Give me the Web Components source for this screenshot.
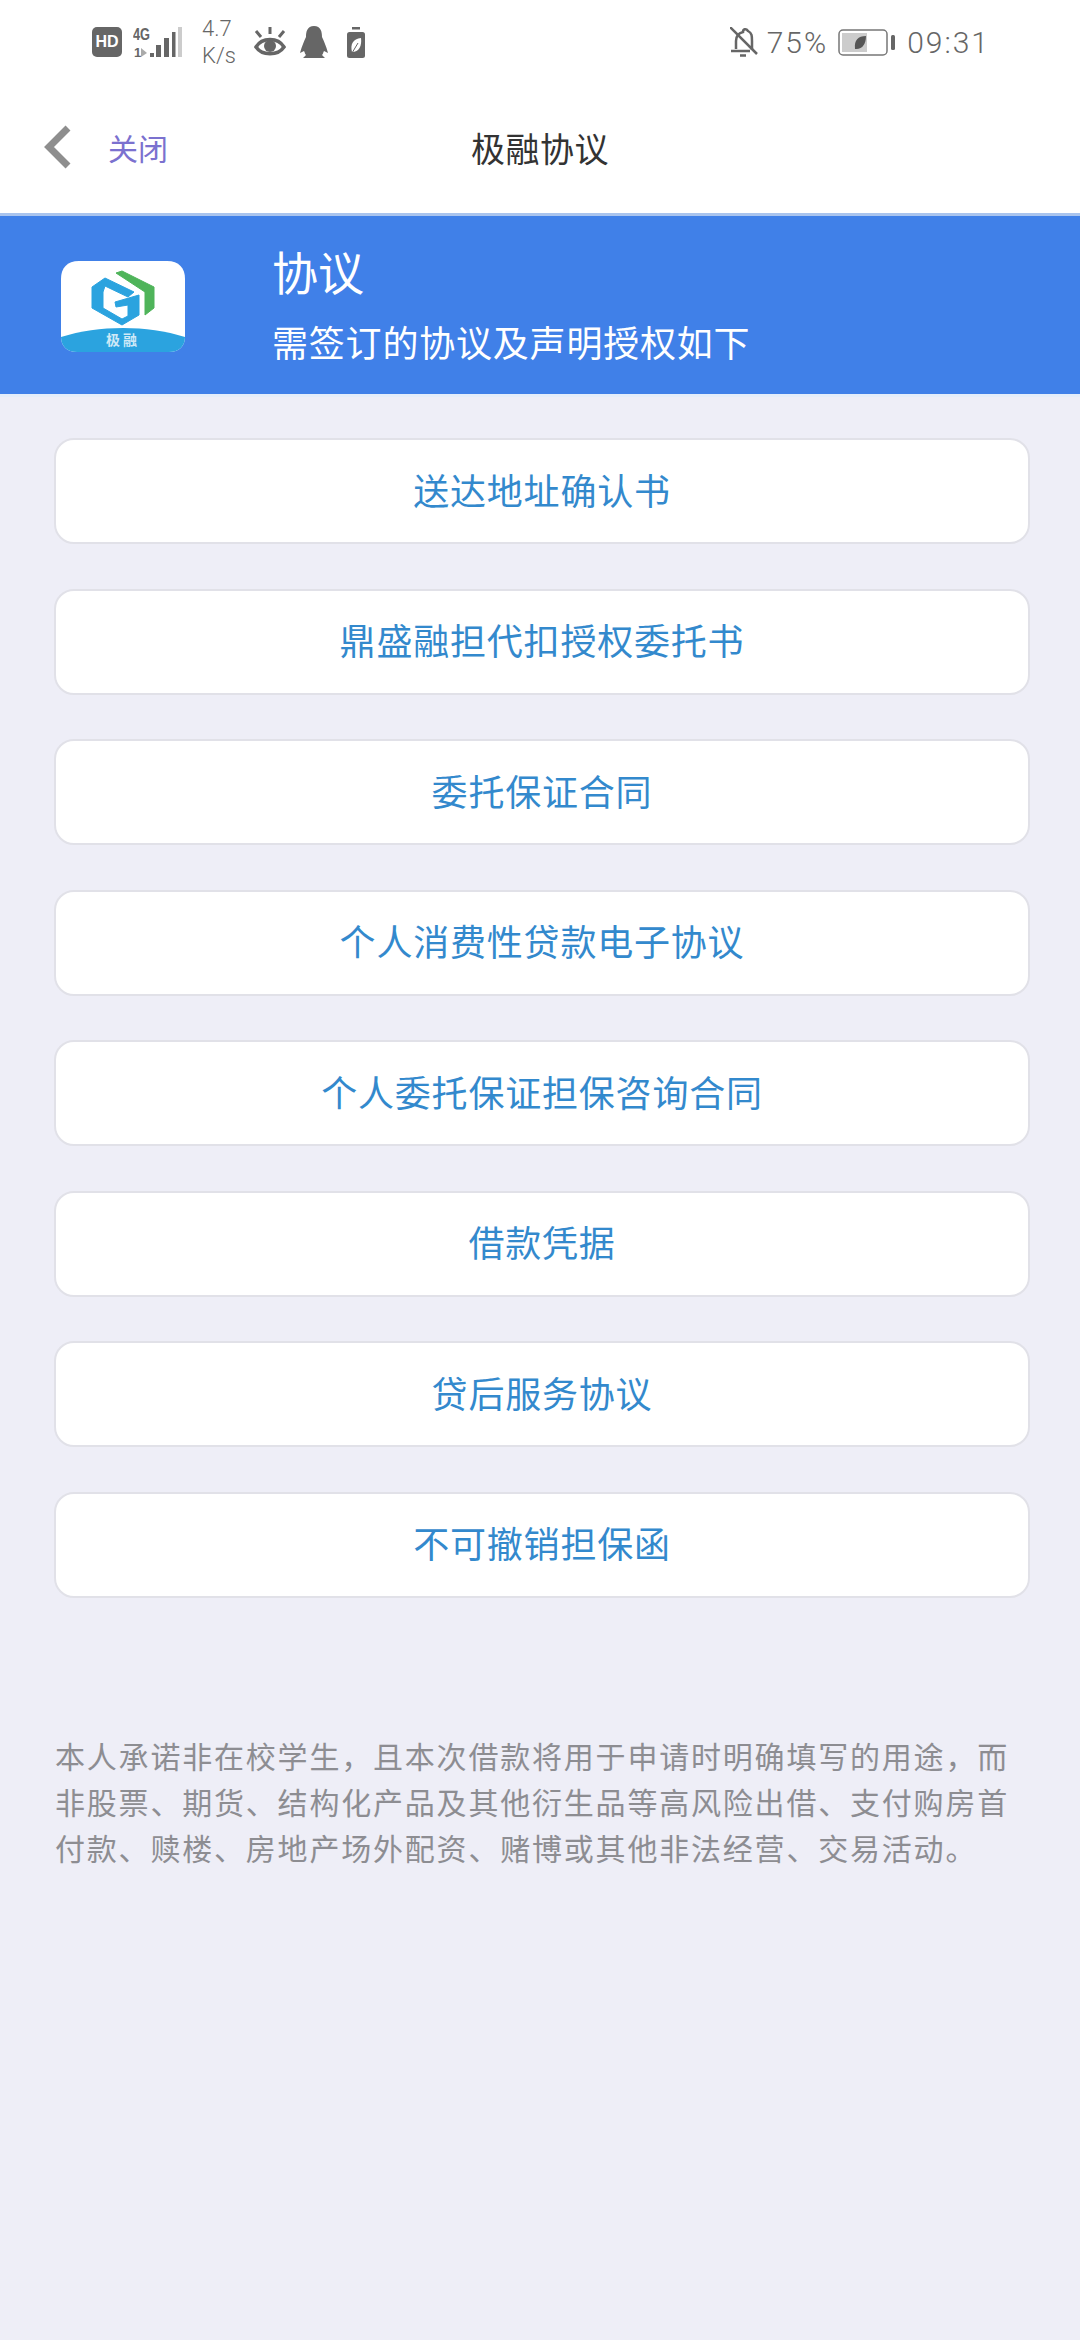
<!DOCTYPE html>
<html lang="zh">
<head>
<meta charset="utf-8">
<title>极融协议</title>
<style>
    html, body { margin: 0; padding: 0; }
    body {
        width: 1080px;
        height: 2340px;
        overflow: hidden;
        background: #eeeef7;
        font-family: "Noto Sans CJK SC", "Noto Sans", sans-serif;
    }
    agreement-list { display: block; }
</style>
</head>
<body>
<status-bar></status-bar>
<nav-bar></nav-bar>
<agreement-banner></agreement-banner>
<agreement-list>
    <agreement-button>送达地址确认书</agreement-button>
    <agreement-button>鼎盛融担代扣授权委托书</agreement-button>
    <agreement-button>委托保证合同</agreement-button>
    <agreement-button>个人消费性贷款电子协议</agreement-button>
    <agreement-button>个人委托保证担保咨询合同</agreement-button>
    <agreement-button>借款凭据</agreement-button>
    <agreement-button>贷后服务协议</agreement-button>
    <agreement-button>不可撤销担保函</agreement-button>
</agreement-list>
<legal-note>本人承诺非在校学生，且本次借款将用于申请时明确填写的用途，而非股票、期货、结构化产品及其他衍生品等高风险出借、支付购房首付款、赎楼、房地产场外配资、赌博或其他非法经营、交易活动。</legal-note>

<script>
class StatusBar extends HTMLElement {
    constructor() {
        super();
        this.attachShadow({ mode: 'open' });
    }

    connectedCallback() {
        this.shadowRoot.innerHTML = `
            <style>
                :host {
                    display: flex;
                    justify-content: space-between;
                    align-items: center;
                    height: 84px;
                    padding: 0 90px 0 92px;
                    background: #fff;
                    color: #666;
                    font-family: "Roboto", sans-serif;
                    font-weight: 300;
                }
                .side { display: flex; align-items: center; }
                svg { display: block; flex: none; }
                .hd {
                    display: flex;
                    align-items: center;
                    justify-content: center;
                    width: 30px;
                    height: 30px;
                    border-radius: 5px;
                    background: #666;
                    color: #fff;
                    font: 700 16px/20px "Liberation Sans", sans-serif;
                }
                .speed {
                    width: 33px;
                    font-size: 22px;
                    line-height: 27px;
                    white-space: nowrap;
                    margin: 0 19px 0 20px;
                }
                .text { font-size: 30px; letter-spacing: 2px; color: #666; }
            </style>
            <div class="side">
                <div class="hd">HD</div>
                <svg width="49" height="30" viewBox="0 0 49 30" style="margin-left:11px">
                    <text x="0" y="13" font-family="Liberation Sans" font-weight="700" font-size="16" fill="#666" textLength="17" lengthAdjust="spacingAndGlyphs">4G</text>
                    <text x="1" y="30" font-family="Liberation Sans" font-weight="700" font-size="13" fill="#666">1</text>
                    <path d="M8 21l6 5-6 4z" fill="#aaa"/>
                    <rect x="17" y="26" width="4" height="4" fill="#666"/>
                    <rect x="23" y="18" width="5" height="12" fill="#666"/>
                    <rect x="31" y="11" width="5" height="19" fill="#666"/>
                    <rect x="39" y="5" width="3.500" height="25" fill="#666"/>
                    <rect x="45" y="0" width="4" height="30" fill="#ccc"/>
                </svg>
                <div class="speed">4.7<br>K/s</div>
                <svg width="32" height="30" viewBox="0 0 32 30">
                    <path d="M2 20C8 10 24 10 30 20C24 29 8 29 2 20Z" fill="none" stroke="#666" stroke-width="3.500"/>
                    <circle cx="16" cy="19" r="6" fill="#666"/>
                    <path d="M16 0v7M2 4l5 6M30 4l-5 6" stroke="#666" stroke-width="3"/>
                </svg>
                <svg width="28" height="32" viewBox="0 0 28 32" style="margin-left:14px">
                    <path d="M14 0C7 0 6 6 6 11C4 15 2 20 0 27L4 25C5 27 5 28 6 29L3 32H25L22 29C23 28 23 27 24 25L28 27C26 20 24 15 22 11C22 6 21 0 14 0Z" fill="#666"/>
                </svg>
                <svg width="18" height="31" viewBox="0 0 18 31" style="margin-left:19px">
                    <rect x="5" y="0" width="8" height="2.500" fill="#666"/>
                    <rect y="5" width="18" height="26" rx="2.500" fill="#666"/>
                    <path d="M14 11C6 12 3 17 5 25C12 25 15 19 14 11Z" fill="#fff"/>
                    <path d="M5 26L11 16" stroke="#666" stroke-width="1"/>
                </svg>
            </div>
            <div class="side">
                <svg width="28" height="30" viewBox="0 0 28 30">
                    <path d="M6 22V14C6 8 9 6 13 5C13 2 16 1 18 4C22 6 22 9 22 14V23" fill="none" stroke="#666" stroke-width="2.500"/>
                    <path d="M1 24H20M10 28.500h6" stroke="#666" stroke-width="2.500"/>
                    <path d="M0 0L27 27" stroke="#666" stroke-width="2.500"/>
                </svg>
                <span class="text" style="margin-left:9px">75%</span>
                <svg width="57" height="27" viewBox="0 0 57 27" style="margin-left:10px">
                    <rect x="1" y="1" width="48" height="25" rx="4" fill="none" stroke="#777" stroke-width="1.500"/>
                    <rect x="4" y="4" width="25" height="19" fill="#ccc"/>
                    <path d="M28 7C20 7 16 11 17 20C24 21 28 15 28 7Z" fill="#555"/>
                    <rect x="53" y="6" width="4" height="15" rx="1.500" fill="#666"/>
                </svg>
                <span class="text" style="margin-left:12px">09:31</span>
            </div>
        `;
    }
}

class NavBar extends HTMLElement {
    constructor() {
        super();
        this.attachShadow({ mode: 'open' });
    }

    connectedCallback() {
        this.shadowRoot.innerHTML = `
            <style>
                :host {
                    display: block;
                    position: relative;
                    height: 129px;
                    background: #fff;
                    border-bottom: 3px solid #a9c4ee;
                    text-align: center;
                    line-height: 128px;
                    font-size: 34px;
                    letter-spacing: 0.500px;
                    color: #333;
                }
                .back {
                    position: absolute;
                    left: 43px;
                    top: 41px;
                    display: flex;
                    align-items: center;
                    gap: 37px;
                    height: 44px;
                    line-height: 44px;
                    font-size: 30px;
                    letter-spacing: 0;
                    color: #7b71cf;
                }
            </style>
            <div class="back">
                <svg width="28" height="44" viewBox="0 0 28 44">
                    <path d="M25 3L6 22L25 41" fill="none" stroke="#8e8e8e" stroke-width="7"/>
                </svg>
                <span>关闭</span>
            </div>
            极融协议
        `;
    }
}

class AgreementBanner extends HTMLElement {
    constructor() {
        super();
        this.attachShadow({ mode: 'open' });
    }

    connectedCallback() {
        this.shadowRoot.innerHTML = `
            <style>
                :host {
                    display: flex;
                    align-items: center;
                    height: 181px;
                    box-sizing: border-box;
                    padding-left: 61px;
                    background: #4080e8;
                    border-bottom: 3px solid #e4edfa;
                    color: #fff;
                }
                .text { margin-left: 87px; }
                .title { font-size: 46px; line-height: 60px; margin-top: -7px; }
                .sub { font-size: 36px; line-height: 46px; margin-top: 18px; letter-spacing: 0.800px; }
                svg { margin-top: 2px; }
            </style>
            <svg width="124" height="91" viewBox="0 0 124 91">
                <path d="M18 0H106C118 0 124 7 124 18V76C124 85 118 91 108 91H16C6 91 0 85 0 76V18C0 7 6 0 18 0Z" fill="#fff"/>
                <path d="M0 76C38 64 86 64 124 76C124 85 118 91 108 91H16C6 91 0 85 0 76Z" fill="#2ba3df"/>
                <path d="M31 26L44 17L73 31L67 36L44 25L42 31V47L61 58L67 55V44L55 46L54 41L78 34V54L61 64L31 47Z" fill="#2ba3df" stroke="#2ba3df" stroke-linejoin="round"/>
                <path d="M55 12L61 10L93 26V47L84 54V31Z" fill="#4fb45a" stroke="#4fb45a" stroke-linejoin="round"/>
                <text x="62" y="84" text-anchor="middle" font-size="14" font-weight="700" fill="#cfe9f7" font-family="Noto Sans CJK SC, sans-serif" letter-spacing="3">极融</text>
            </svg>
            <div class="text">
                <div class="title">协议</div>
                <div class="sub">需签订的协议及声明授权如下</div>
            </div>
        `;
    }
}

class AgreementButton extends HTMLElement {
    constructor() {
        super();
        this.attachShadow({ mode: 'open' });
    }

    connectedCallback() {
        this.shadowRoot.innerHTML = `
            <style>
                :host {
                    display: flex;
                    align-items: center;
                    justify-content: center;
                    box-sizing: border-box;
                    width: 976px;
                    height: 106px;
                    margin: 0 0 44.500px 54px;
                    padding-bottom: 5px;
                    background: #fff;
                    border: 2px solid #e1e1e8;
                    border-radius: 20px;
                    font-size: 36px;
                    letter-spacing: 0.800px;
                    color: #3389cd;
                }
                :host(:first-child) { margin-top: 41px; }
            </style>
            <slot></slot>
        `;
    }
}

class LegalNote extends HTMLElement {
    constructor() {
        super();
        this.attachShadow({ mode: 'open' });
    }

    connectedCallback() {
        this.shadowRoot.innerHTML = `
            <style>
                :host {
                    display: block;
                    margin: 134px 54px 0 55px;
                    font-size: 30px;
                    line-height: 46px;
                    letter-spacing: 1.800px;
                    color: #8d8d92;
                }
            </style>
            <slot></slot>
        `;
    }
}

customElements.define('status-bar', StatusBar);
customElements.define('nav-bar', NavBar);
customElements.define('agreement-banner', AgreementBanner);
customElements.define('agreement-button', AgreementButton);
customElements.define('legal-note', LegalNote);
</script>
</body>
</html>
